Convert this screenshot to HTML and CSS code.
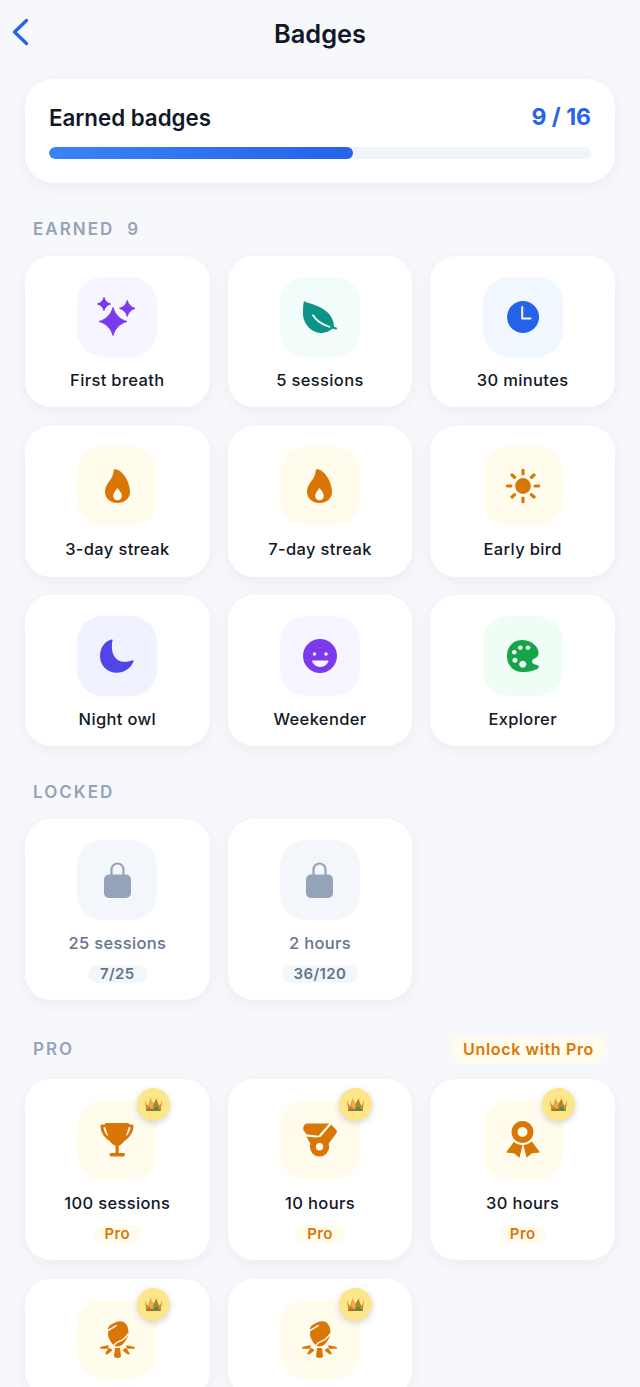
FILE: index.html
```html
<!DOCTYPE html>
<html lang="en">
<head>
  <meta charset="UTF-8" />
  <meta name="viewport" content="width=device-width, initial-scale=1.0" />
  <title>Badges</title>
  <link rel="stylesheet" href="styles.css">
</head>
<body>
  <svg class="sprites" width="0" height="0" aria-hidden="true">
    <symbol id="i-crown" viewBox="0 0 17 13">
      <path d="M0 4l3 4 2.500-7 3 5 3-5 2.500 7 3-4-1.500 9h-14z" fill="#c8932c"/>
      <path d="M5.500 1l3 5-1.500 7H3z" fill="#e3ae4e"/>
      <path d="M11.500 1l2.500 7 .5 5H10L8.500 6z" fill="#b98224"/>
      <path d="M1.300 11h14.400l-.2 2h-14z" fill="#a07426"/>
      <circle cx="5.500" cy="1" r=".8" fill="#e3ae4e"/>
      <circle cx="11.500" cy="1" r=".8" fill="#e3ae4e"/>
      <circle cx=".6" cy="3.800" r=".6" fill="#c8932c"/>
      <circle cx="16.400" cy="3.800" r=".6" fill="#c8932c"/>
      <circle cx="4.300" cy="10.600" r="1.500" fill="#d9694a"/>
      <circle cx="11.200" cy="10.600" r="1.800" fill="#1f9d6b"/>
    </symbol>
    <symbol id="i-flame" viewBox="0 0 25 34">
      <path fill-rule="evenodd" d="M9 .5C9.500.2 10 0 11 .3 18 2 25 13 25 23c0 6.500-5.500 11-12.500 11S0 29.500 0 23c0-6 4-10 6.500-14C8 6.500 8.500 3 9 .5zM12.500 19C10 22 8.200 24.500 8.200 27c0 2.500 1.800 4.200 4.300 4.200s4.300-1.700 4.300-4.200c0-2.500-1.800-5-4.300-8z"/>
    </symbol>
    <symbol id="i-lock" viewBox="0 0 27 36">
      <path d="M7.500 13V7.500a6 6 0 0 1 12 0V13" fill="none" stroke="currentColor" stroke-width="2.200"/>
      <rect y="12.500" width="27" height="23.500" rx="5" fill="currentColor"/>
    </symbol>
    <symbol id="i-campfire" viewBox="0 0 35 37">
      <g fill="#d97706">
        <path d="M20 .3c5-.3 8.500 4.700 8.500 10.700 0 3-1 5.500-2.500 8-2 3-4.500 6.500-8.500 6.500-3 0-5-2-6.500-4.500C9 18 8 15.500 8 13c0-1 .2-2 .7-3-.8-1-1.200-2-.7-3 1.500-3 3-3.500 5-4.500 2-1 4-2 7-2.200z"/>
        <path d="M0 26.300c3-1.300 6-1.800 9-1.800l-1 3.200H.8c-.8 0-1.100-.9-.8-1.400z"/>
        <path d="M9 26.800l3.500 2.200c-1.500 1.700-3.500 3.300-5.500 4.400-1 .5-2-.5-1.500-1.400 1-1.800 2.300-3.700 3.500-5.200z"/>
        <g transform="matrix(-1 0 0 1 35 0)">
          <path d="M0 26.300c3-1.300 6-1.800 9-1.800l-1 3.200H.8c-.8 0-1.100-.9-.8-1.400z"/>
          <path d="M9 26.800l3.500 2.200c-1.500 1.700-3.500 3.300-5.500 4.400-1 .5-2-.5-1.500-1.400 1-1.800 2.300-3.700 3.500-5.200z"/>
        </g>
        <path d="M15 27h5l1 8c0 1.300-1.500 2-3.500 2s-3.500-.7-3.500-2z"/>
      </g>
      <path d="M7.500 9.200c2.500.2 5.800-3.300 9.200-4.900M13 26c2-5 6-5 9-7 2-1 4-3 6.500-6.500" fill="none" stroke="#fffcee" stroke-width="1.400"/>
    </symbol>
  </svg>

  <div class="app">
    <header class="topbar">
      <button class="back" aria-label="Back">
        <svg width="18" height="28" viewBox="0 0 18 28"><path d="M15.500 2.500 3.500 14l12 11.500" fill="none" stroke="#2563eb" stroke-width="3.300" stroke-linecap="round" stroke-linejoin="round"/></svg>
      </button>
      <h1>Badges</h1>
    </header>

    <section class="summary">
      <div class="summary-row">
        <span class="summary-title">Earned badges</span>
        <span class="summary-count">9 / 16</span>
      </div>
      <div class="progress-bar">
        <div class="progress-fill" style="width: 56%"></div>
      </div>
    </section>

    <div class="section-head">
      <h2>EARNED<span class="section-num">9</span></h2>
    </div>
    <div class="badge-grid">
      <div class="badge">
        <div class="tile tile-violet">
          <svg class="icon sparkles" viewBox="0 0 40 40" fill="#7c3aed" stroke="#7c3aed" stroke-width="1" stroke-linejoin="round">
            <path d="M16 10.500C17.800 17 22.500 22.700 30 24.500 22.500 26.300 17.800 32 16 38.500 14.200 32 9.500 26.300 2 24.500 9.500 22.700 14.200 17 16 10.500z"/>
            <path d="M7 .5C7.900 3.800 10.200 6.100 13.500 7 10.200 7.900 7.900 10.200 7 13.500 6.100 10.200 3.800 7.900.5 7 3.800 6.100 6.100 3.800 7 .5z"/>
            <path d="M30.300 3.500C31.300 7.400 34 10.400 38 11.400 34 12.400 31.300 15.400 30.300 19.300 29.300 15.400 26.500 12.400 22.500 11.400 26.500 10.400 29.300 7.400 30.300 3.500z"/>
          </svg>
        </div>
        <div class="badge-name">First breath</div>
      </div>
      <div class="badge">
        <div class="tile tile-teal">
          <svg class="icon" viewBox="0 0 34 32">
            <path d="M1 .3C7 3 14 4 20 8c7 4 11 11 11 18-4 5-11 7-17 5.500C6 29 0 21 0 13 0 8 0 4 1 .3z" fill="#0d9488"/>
            <path d="M10 14.300c3 5 8 9 17 11.700" fill="none" stroke="#f2fdfb" stroke-width="1.800" stroke-linecap="round"/>
            <path d="M28 26l5 1.500" fill="none" stroke="#0d9488" stroke-width="2" stroke-linecap="round"/>
          </svg>
        </div>
        <div class="badge-name">5 sessions</div>
      </div>
      <div class="badge">
        <div class="tile tile-blue">
          <svg class="icon clock" viewBox="0 0 32 32">
            <circle cx="16" cy="16" r="16" fill="#2563eb"/>
            <path d="M15.200 6v11.500h8.300" fill="none" stroke="#f1f7ff" stroke-width="2" stroke-linecap="round" stroke-linejoin="round"/>
          </svg>
        </div>
        <div class="badge-name">30 minutes</div>
      </div>
      <div class="badge">
        <div class="tile tile-amber"><svg class="icon flame"><use href="#i-flame"/></svg></div>
        <div class="badge-name">3-day streak</div>
      </div>
      <div class="badge">
        <div class="tile tile-amber"><svg class="icon flame"><use href="#i-flame"/></svg></div>
        <div class="badge-name">7-day streak</div>
      </div>
      <div class="badge">
        <div class="tile tile-amber">
          <svg class="icon sun" viewBox="0 0 36 36" stroke="#d97706" stroke-width="3.200" stroke-linecap="round">
            <circle cx="18" cy="18" r="7.900" fill="#d97706" stroke="none"/>
            <path d="M18 2.300v3.600M18 30.100v3.600M2.300 18h3.600M30.100 18h3.600M7 7l2.500 2.300M26.500 26.700 29 29M7 29l2.500-2.300M26.500 9.300 29 7" fill="none"/>
          </svg>
        </div>
        <div class="badge-name">Early bird</div>
      </div>
      <div class="badge">
        <div class="tile tile-indigo">
          <svg class="icon" viewBox="0 0 34.500 34">
            <path d="M11.500.2C4.500 2 0 9 0 17c0 9.500 7.500 17 17 17 7.500 0 14.500-5 17-11.500.3-1-.5-1.500-1.500-1C23 25 15 22 12.700 13c-.9-4-.9-9 .1-12 .2-.7-.5-1-1.300-.8z" fill="#4f46e5"/>
          </svg>
        </div>
        <div class="badge-name">Night owl</div>
      </div>
      <div class="badge">
        <div class="tile tile-violet">
          <svg class="icon" viewBox="0 0 34 34">
            <circle cx="17" cy="17" r="17" fill="#7c3aed"/>
            <circle cx="11.500" cy="15" r="1.700" fill="#f7f5ff"/>
            <circle cx="23" cy="15" r="1.700" fill="#f7f5ff"/>
            <path d="M9 21.500h16.500c-.5 3.500-4 6.500-8.200 6.500S9.500 25 9 21.500z" fill="#f7f5ff"/>
          </svg>
        </div>
        <div class="badge-name">Weekender</div>
      </div>
      <div class="badge">
        <div class="tile tile-green">
          <svg class="icon clock" viewBox="0 0 32 32">
            <path fill-rule="evenodd" fill="#16a34a" d="M15 0c7 0 14 4 16 10 1 3 .5 6-1 7-2 1.500-5 2-5 4.500 0 2 3 3 6 4 1 .5 1 2 0 3-5 3-12 3.500-16 3.500C6 32 0 25 0 16S6 0 15 0zM13.300 5.400a2.300 2.300 0 1 0 .01 0zM21 5.400a2.300 2.300 0 1 0 .01 0zM7.300 10a2.300 2.300 0 1 0 .01 0zM8 17.800a2.500 2.500 0 1 0 .01 0zM15.700 20.800a3.500 3.500 0 1 0 .01 0z"/>
          </svg>
        </div>
        <div class="badge-name">Explorer</div>
      </div>
    </div>

    <div class="section-head">
      <h2>LOCKED</h2>
    </div>
    <div class="badge-grid">
      <div class="badge locked">
        <div class="tile tile-grey"><svg class="icon lock"><use href="#i-lock"/></svg></div>
        <div class="badge-name">25 sessions</div>
        <div class="pill pill-grey">7/25</div>
      </div>
      <div class="badge locked">
        <div class="tile tile-grey"><svg class="icon lock"><use href="#i-lock"/></svg></div>
        <div class="badge-name">2 hours</div>
        <div class="pill pill-grey">36/120</div>
      </div>
    </div>

    <div class="section-head pro-head">
      <h2>PRO</h2>
      <span class="unlock">Unlock with Pro</span>
    </div>
    <div class="badge-grid">
      <div class="badge">
        <div class="crown"><svg><use href="#i-crown"/></svg></div>
        <div class="tile tile-amber">
          <svg class="icon" viewBox="0 0 34 35" fill="#d97706">
            <path fill-rule="evenodd" d="M6 0h22c1 0 1.500.6 1.500 1.500h3c1 0 1.500.7 1.500 1.700-.2 6.800-4 12.300-9.500 15.300-1.500 2.500-4 4.300-5.700 5V31h4.700c1.100 0 1.700.8 1.700 1.700 0 1-.6 1.800-1.700 1.800H11c-1.100 0-1.700-.8-1.700-1.800 0-.9.6-1.700 1.700-1.700h4.500v-7.500c-2-.7-4.500-2.500-6-5C4 15.500.2 10 0 3.200 0 2.200.5 1.500 1.500 1.500h3C4.500.6 5 0 6 0zM3 4.500c.5 4 2.500 7.500 5 9.500-1-3-2-6-3-9.500zM31 4.500h-2c-1 3.500-2 6.500-3 9.500 2.500-2 4.500-5.500 5-9.500z"/>
          </svg>
        </div>
        <div class="badge-name">100 sessions</div>
        <div class="pill pill-amber">Pro</div>
      </div>
      <div class="badge">
        <div class="crown"><svg><use href="#i-crown"/></svg></div>
        <div class="tile tile-amber">
          <svg class="icon" viewBox="0 0 35 35" fill="#d97706">
            <path d="M4 .5h23L16 13 3.500 11.500 .3 7C-.3 4 2 .5 4 .5z"/>
            <path d="M29 1.500l5.500 6c.6.800.5 2-.1 3L26 22H8L3.500 14 17 15.500z"/>
            <circle cx="17" cy="24.500" r="10"/>
            <circle cx="17" cy="24.500" r="3.800" fill="#fffcee"/>
          </svg>
        </div>
        <div class="badge-name">10 hours</div>
        <div class="pill pill-amber">Pro</div>
      </div>
      <div class="badge">
        <div class="crown"><svg><use href="#i-crown"/></svg></div>
        <div class="tile tile-amber">
          <svg class="icon ribbon" viewBox="0 0 34 37" fill="#d97706">
            <path d="M10 18l6.500 6-3 12.700L8 32.300l-8-.8zM24 18l-6.500 6 3 12.700 5.500-4.400 8-.8z"/>
            <circle cx="16.500" cy="11" r="13" fill="#fffcee"/>
            <path fill-rule="evenodd" d="M16.500 0a11 11 0 1 1-.01 0zM16.500 6a5 5 0 1 0 .01 0z"/>
          </svg>
        </div>
        <div class="badge-name">30 hours</div>
        <div class="pill pill-amber">Pro</div>
      </div>
      <div class="badge">
        <div class="crown"><svg><use href="#i-crown"/></svg></div>
        <div class="tile tile-amber"><svg class="icon campfire"><use href="#i-campfire"/></svg></div>
      </div>
      <div class="badge">
        <div class="crown"><svg><use href="#i-crown"/></svg></div>
        <div class="tile tile-amber"><svg class="icon campfire"><use href="#i-campfire"/></svg></div>
      </div>
    </div>
  </div>
</body>
</html>
```

FILE: styles.css
```css
* {
  margin: 0;
  padding: 0;
  box-sizing: border-box;
}

html, body {
  height: 1387px;
  overflow: hidden;
}

body {
  font-family: 'Inter', sans-serif;
  background: #f6f8fc;
  color: #111827;
}

.sprites {
  position: absolute;
}

.app {
  padding: 0 25px;
}

.topbar {
  display: flex;
  align-items: center;
  justify-content: center;
  height: 66px;
  position: relative;
}

.topbar h1 {
  font-size: 25.4px;
  font-weight: 600;
  color: #111827;
}

.back {
  position: absolute;
  left: -14px;
  top: 18px;
  background: none;
  border: none;
}

.summary {
  margin-top: 13px;
  height: 104px;
  padding: 24px 24px 0;
  background: #fff;
  border-radius: 28px;
  box-shadow: 0 4px 16px rgba(15, 23, 42, 0.05);
}

.summary-row {
  display: flex;
  justify-content: space-between;
  align-items: center;
  height: 28px;
}

.summary-title {
  font-size: 22.3px;
  font-weight: 600;
}

.summary-count {
  font-size: 23px;
  font-weight: 700;
  color: #2563eb;
}

.progress-bar {
  height: 12px;
  margin-top: 16px;
  background: #f1f5f9;
  border-radius: 6px;
  overflow: hidden;
}

.progress-fill {
  height: 100%;
  background: linear-gradient(90deg, #3b82f6, #2563eb);
  border-radius: 6px;
}

.section-head {
  display: flex;
  justify-content: space-between;
  align-items: center;
  min-height: 20px;
  margin: 35.5px 8px 17.5px;
}

.pro-head {
  margin-bottom: 16.5px;
}

.section-head h2 {
  font-size: 17px;
  font-weight: 600;
  letter-spacing: 2px;
  color: #94a3b8;
}

.section-num {
  margin-left: 13px;
}

.unlock {
  height: 27px;
  padding: 0 13px;
  font-size: 16px;
  line-height: 27px;
  font-weight: 600;
  letter-spacing: 0.65px;
  color: #d97706;
  background: #fffcee;
  border-radius: 14px;
}

.badge-grid {
  display: grid;
  grid-template-columns: repeat(3, 1fr);
  gap: 18.5px 18px;
}

.badge {
  position: relative;
  display: flex;
  flex-direction: column;
  align-items: center;
  padding: 20.5px 8px 17.5px;
  background: #fff;
  border-radius: 26px;
  box-shadow: 0 4px 16px rgba(15, 23, 42, 0.05);
}

.tile {
  display: flex;
  align-items: center;
  justify-content: center;
  width: 80px;
  height: 80px;
  border-radius: 26px;
}

.tile-violet { background: #f7f5ff; }
.tile-teal { background: #f2fdfb; }
.tile-blue { background: #f1f7ff; }
.tile-amber { background: #fffcee; }
.tile-indigo { background: #f0f3ff; }
.tile-green { background: #f0fdf5; }
.tile-grey { background: #f3f6fa; }

.icon {
  display: block;
  width: 34px;
  height: 34px;
}

.sparkles {
  width: 40px;
  height: 40px;
}

.clock {
  width: 32px;
  height: 32px;
}

.sun {
  width: 36px;
  height: 36px;
}

.flame {
  width: 25px;
  fill: #d97706;
}

.lock {
  width: 27px;
  height: 36px;
  color: #94a3b8;
}

.ribbon {
  height: 37px;
}

.campfire {
  width: 35px;
  height: 37px;
}

.badge-name {
  margin-top: 13px;
  font-size: 16.5px;
  line-height: 20px;
  font-weight: 500;
  letter-spacing: 0.35px;
  color: #111827;
}

.locked .badge-name {
  color: #64748b;
}

.pill {
  margin-top: 12px;
  padding: 0 12px;
  font-size: 15px;
  line-height: 18px;
  font-weight: 600;
  letter-spacing: 0.4px;
  border-radius: 10px;
}

.pill-grey {
  background: #f3f6fa;
  color: #64748b;
}

.pill-amber {
  background: #fffcee;
  color: #d97706;
}

.crown {
  position: absolute;
  top: 9px;
  right: 40px;
  display: flex;
  align-items: center;
  justify-content: center;
  width: 33px;
  height: 33px;
  background: #fde68a;
  border-radius: 50%;
  box-shadow: 0 2px 6px rgba(15, 23, 42, 0.18);
}

.crown svg {
  width: 17px;
  height: 13px;
}
```
